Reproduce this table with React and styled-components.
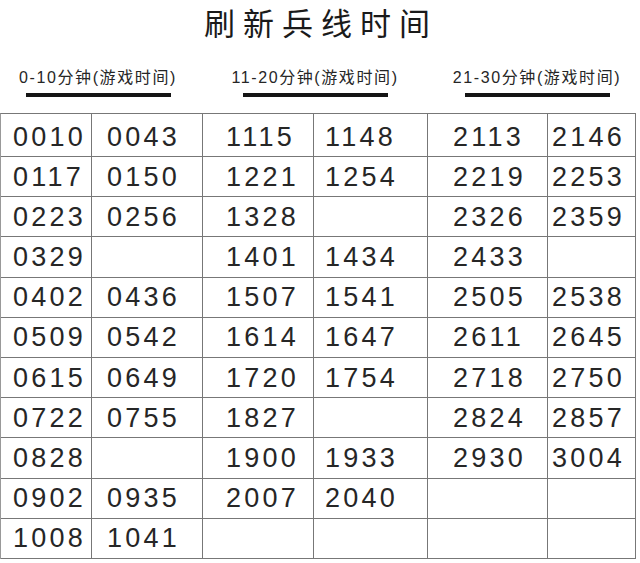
import React from 'react'
import styled, { createGlobalStyle } from 'styled-components'

const GlobalStyle = createGlobalStyle`
  html, body {
    margin: 0;
    padding: 0;
    background: #ffffff;
  }
  body {
    font-family: "Liberation Sans", "Noto Sans CJK SC", sans-serif;
    color: #1c1c1c;
  }
`

const groups = [
  { label: '0-10', width: 196 },
  { label: '11-20', width: 238 },
  { label: '21-30', width: 206 },
]

// column widths and the left inset of the number in each column
const columns = [
  { width: 91, inset: 12 },
  { width: 111, inset: 15 },
  { width: 111, inset: 23 },
  { width: 114, inset: 11 },
  { width: 120, inset: 25 },
  { width: 88, inset: 4 },
]

const data = [
  ['0010', '0117', '0223', '0329', '0402', '0509', '0615', '0722', '0828', '0902', '1008'],
  ['0043', '0150', '0256', '', '0436', '0542', '0649', '0755', '', '0935', '1041'],
  ['1115', '1221', '1328', '1401', '1507', '1614', '1720', '1827', '1900', '2007', ''],
  ['1148', '1254', '', '1434', '1541', '1647', '1754', '', '1933', '2040', ''],
  ['2113', '2219', '2326', '2433', '2505', '2611', '2718', '2824', '2930', '', ''],
  ['2146', '2253', '2359', '', '2538', '2645', '2750', '2857', '3004', '', ''],
]

function App() {
  const rows = data[0].length

  return (
    <Page>
      <GlobalStyle />
      <Title>刷新兵线时间</Title>

      <Heads>
        {groups.map((g) => (
          <Head key={g.label} $width={g.width}>
            <HeadText>{g.label}分钟(游戏时间)</HeadText>
            <HeadBar />
          </Head>
        ))}
      </Heads>

      <Table $cols={columns.map((c) => c.width + 'px').join(' ')}>
        {Array.from({ length: rows }).map((_, r) =>
          columns.map((c, ci) => (
            <Cell key={r + '-' + ci} $inset={c.inset} $first={r === 0}>
              {data[ci][r]}
            </Cell>
          ))
        )}
      </Table>
    </Page>
  )
}

export default App

const Page = styled.div`
  width: 640px;
  height: 563px;
  overflow: hidden;
  background: #fff;
`

const Title = styled.h1`
  margin: 0;
  line-height: 44px;
  text-align: center;
  padding-left: 2px;
  font-family: "Noto Sans CJK SC", sans-serif;
  font-weight: 400;
  font-size: 31px;
  letter-spacing: 8px;
  color: #1a1a1a;
  white-space: nowrap;
`

const Heads = styled.div`
  display: flex;
  padding-top: 24px;
  height: 45px;
`

const Head = styled.div`
  width: ${(p) => p.$width}px;
  display: flex;
  flex-direction: column;
  align-items: center;
`

const HeadText = styled.div`
  height: 20px;
  line-height: 20px;
  font-size: 16px;
  letter-spacing: 1.6px;
  color: #262626;
  white-space: nowrap;
`

const HeadBar = styled.div`
  margin-top: 5px;
  width: 145px;
  height: 4px;
  background: #151515;
`

const Table = styled.div`
  display: grid;
  grid-template-columns: ${(p) => p.$cols};
  grid-template-rows: 43px repeat(10, 40.2px);
  border-top: 1px solid #777;
  border-left: 1px solid #999;
  box-sizing: border-box;
  width: 636px;
`

const Cell = styled.div`
  box-sizing: border-box;
  border-right: 1px solid #777;
  border-bottom: 1px solid #777;
  display: flex;
  align-items: center;
  padding-left: ${(p) => p.$inset}px;
  padding-top: ${(p) => (p.$first ? 4 : 1)}px;
  font-family: "Liberation Sans", Arial, sans-serif;
  font-size: 27px;
  letter-spacing: 3.2px;
  color: #262626;
`
